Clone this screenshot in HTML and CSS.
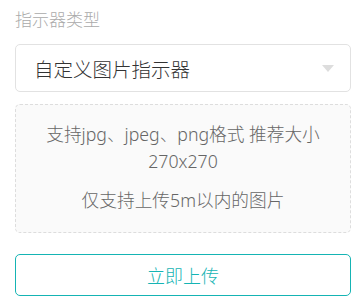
FILE: index.html
```html
<!DOCTYPE html>
<html lang="zh">
<head>
<meta charset="utf-8">
<link rel="stylesheet" href="styles.css">
</head>
<body>
<div class="page">
  <div class="label">指示器类型</div>
  <div class="select">
    <span class="select-text">自定义图片指示器</span>
    <span class="arrow"></span>
  </div>
  <div class="upload-area">
    <p class="tip">支持jpg、jpeg、png格式 推荐大小<br>270x270</p>
    <p class="tip tip-size">仅支持上传5m以内的图片</p>
  </div>
  <button class="upload-btn" type="button">立即上传</button>
</div>
</body>
</html>
```
FILE: styles.css
```css
html, body {
  margin: 0;
  padding: 0;
  background: #ffffff;
}
body {
  font-family: "Noto Sans", "Noto Sans CJK SC", sans-serif;
  font-weight: 300;
}
.page {
  width: 336px;
  padding: 8px 0 0 15px;
  display: flex;
  flex-direction: column;
}
.label {
  font-size: 17px;
  line-height: 24px;
  color: #aaaaaa;
  margin-bottom: 12px;
}
.select {
  box-sizing: border-box;
  height: 48px;
  border: 1px solid #e2e2e2;
  border-radius: 5px;
  display: flex;
  align-items: center;
  justify-content: space-between;
  padding: 0 16px 0 18px;
}
.select-text {
  font-size: 19.5px;
  color: #333333;
}
.arrow {
  width: 0;
  height: 0;
  border-left: 6px solid transparent;
  border-right: 6px solid transparent;
  border-top: 7px solid #dddddd;
}
.upload-area {
  box-sizing: border-box;
  margin-top: 12px;
  height: 129px;
  border: 1px dashed #dddddd;
  border-radius: 5px;
  background: #fafafa;
  padding: 16px 6px 0;
  text-align: center;
}
.tip {
  margin: 0;
  font-size: 17.7px;
  line-height: 27px;
  color: #666666;
}
.tip-size {
  margin-top: 12px;
}
.upload-btn {
  box-sizing: border-box;
  margin-top: 21px;
  height: 42px;
  width: 100%;
  border: 1px solid #15b4b4;
  border-radius: 5px;
  background: #ffffff;
  color: #15b4b4;
  font-family: "Noto Sans", "Noto Sans CJK SC", sans-serif;
  font-weight: 300;
  font-size: 18px;
  padding: 0;
}
```
